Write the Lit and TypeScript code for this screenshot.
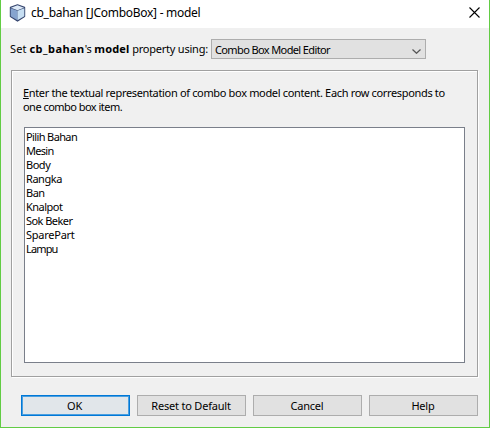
import { LitElement, html, css } from "lit";
import { customElement, property } from "lit/decorators.js";

@customElement("dialog-button")
class DialogButton extends LitElement {
  @property() label = "";
  @property({ type: Boolean, reflect: true }) primary = false;
  static styles = css`
    :host { display: block; width: 109px; height: 21px; }
    button {
      display: block; box-sizing: border-box; width: 100%; height: 100%;
      margin: 0; padding: 0 1px 1px 0; border: 1px solid #adadad; background: #e1e1e1;
      font: inherit; letter-spacing: -0.2px; color: #000; line-height: 17px;
    }
    :host([primary]) button {
      border-color: #0078d7; background: #e1e6ea; box-shadow: inset 0 0 0 1px #4a9fe0;
      padding-right: 2px;
    }
  `;
  render() {
    return html`<button>${this.label}</button>`;
  }
}

@customElement("app-root")
class AppRoot extends LitElement {
  items = [
    { text: "Pilih Bahan", tracking: -0.62 },
    { text: "Mesin", tracking: -0.7 },
    { text: "Body", tracking: -0.48 },
    { text: "Rangka", tracking: -0.45 },
    { text: "Ban", tracking: -0.48 },
    { text: "Knalpot", tracking: -0.52 },
    { text: "Sok Beker", tracking: -0.55 },
    { text: "SparePart", tracking: -0.25 },
    { text: "Lampu", tracking: -0.85 },
  ];

  static styles = css`
    :host {
      display: flex; flex-direction: column; box-sizing: border-box;
      width: 490px; height: 428px; overflow: hidden;
      border: 1px solid #62cc44; border-top: 0;
      background: #f0f0f0; color: #000;
      font: 11px/14px "Noto Sans", "Open Sans", sans-serif;
      white-space: nowrap;
    }
    header {
      display: flex; align-items: center; height: 28px; flex: none; box-sizing: border-box;
      padding: 0 9px 3px 8px; background: #fff; font-size: 12px;
    }
    .cube { width: 17px; height: 18px; margin-right: 5px; }
    .title { flex: 1; letter-spacing: -0.28px; }
    .close { width: 11px; height: 11px; }
    .chooser { display: flex; height: 20px; margin: 11px 0 0 9px; line-height: 19px; }
    .prompt { display: flex; width: 201px; white-space: pre; }
    .set { letter-spacing: 0.1px; }
    .name { letter-spacing: 0.45px; }
    .possessive { letter-spacing: -0.2px; }
    .prop { letter-spacing: 0.15px; }
    .using { letter-spacing: -0.22px; }
    .combo {
      display: flex; align-items: center; justify-content: space-between;
      box-sizing: border-box; width: 215px; height: 20px; padding: 0 4px 0 3px;
      border: 1px solid #adadad; background: #e1e1e1; line-height: 17px;
    }
    .choice { letter-spacing: -0.62px; }
    .arrow { width: 9px; height: 5px; margin-top: 5px; }
    .panel {
      box-sizing: border-box; width: 467px; height: 307px; margin: 11px 0 0 10px; padding: 15px 12px 13px 12px;
      border: 1px solid #a0a0a0;
      box-shadow: inset 1px 1px 0 #fff, 1px 1px 0 #fff;
      display: flex; flex-direction: column;
    }
    .hint { height: 28px; margin-left: -1px; letter-spacing: -0.34px; }
    .second { letter-spacing: -0.53px; }
    .mnemonic { text-decoration: underline; text-underline-offset: 1px; }
    .editor {
      flex: 1; box-sizing: border-box; margin-top: 13px; padding: 2px 1px;
      border: 1px solid #7a7f8a; background: #fff;
    }
    footer { display: flex; gap: 7px; margin: 18px 0 0 20px; }
  `;

  render() {
    return html`
      <header>
        <svg class="cube" viewBox="0 0 17 18">
          <path d="M8.5 1 L15.5 3.5 V12.5 L8.5 17 L1.5 12.5 V3.5Z" fill="#35456e" stroke="#35456e" stroke-width="1.4" stroke-linejoin="round"/>
          <path d="M8.5 1.3 L15 3.8 L8.5 6.3 L2 3.8Z" fill="#dce9f7"/>
          <path d="M1.7 4.2 L8.5 6.8 V16.2 L1.7 12.2Z" fill="#86a4cf"/>
          <path d="M8.5 6.8 L15.3 4.2 V12.2 L8.5 16.2Z" fill="#c6def2"/>
        </svg>
        <span class="title">cb_bahan [JComboBox] - model</span>
        <svg class="close" viewBox="0 0 11 11"><path d="M.5 .5 L10.5 10.5 M10.5 .5 L.5 10.5" stroke="#000" stroke-width="1.1"/></svg>
      </header>
      <div class="chooser">
        <div class="prompt"><span class="set">Set </span><b class="name">cb_bahan</b><span class="possessive">'s </span><b class="prop">model</b><span class="using"> property using:</span></div>
        <div class="combo">
          <span class="choice">Combo Box Model Editor</span>
          <svg class="arrow" viewBox="0 0 9 5"><path d="M.5 .5 L4.5 4.3 L8.5 .5" fill="none" stroke="#555" stroke-width="1.2"/></svg>
        </div>
      </div>
      <section class="panel">
        <div class="hint">
          <div><span class="mnemonic">E</span>nter the textual representation of combo box model content. Each row corresponds to</div>
          <div class="second">one combo box item.</div>
        </div>
        <div class="editor">${this.items.map((item) => html`<div style="letter-spacing:${item.tracking}px">${item.text}</div>`)}</div>
      </section>
      <footer>
        <dialog-button primary label="OK"></dialog-button>
        <dialog-button label="Reset to Default"></dialog-button>
        <dialog-button label="Cancel"></dialog-button>
        <dialog-button label="Help"></dialog-button>
      </footer>
    `;
  }
}
